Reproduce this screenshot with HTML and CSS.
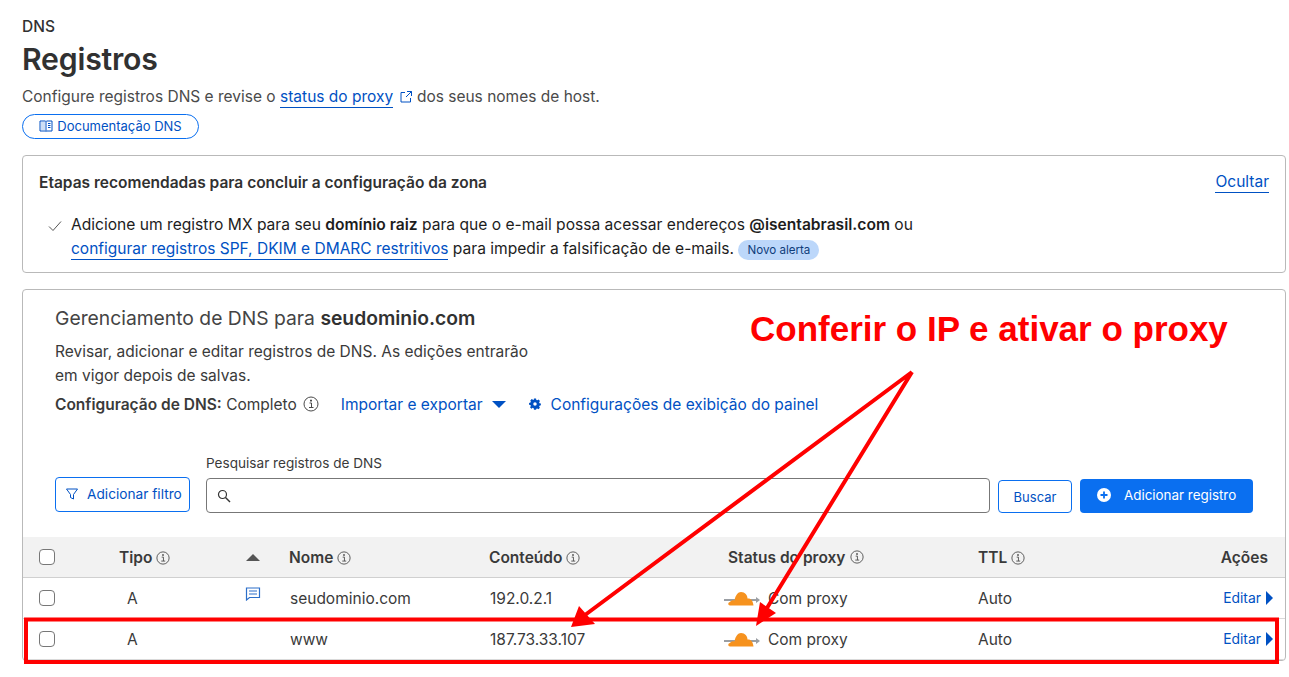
FILE: index.html
```html
<!DOCTYPE html>
<html lang="pt-BR">
<head>
    <meta charset="UTF-8">
    <meta name="viewport" content="width=device-width, initial-scale=1.0">
    <title>Registros DNS</title>
    <link rel="stylesheet" href="styles.css">
</head>
<body>
    <div class="page">
        <header class="page-head">
            <div class="crumb">DNS</div>
            <h1>Registros</h1>
            <p class="intro">Configure registros DNS e revise o <a href="#">status do proxy</a>
                <svg class="ext-icon" viewBox="0 0 14 14" width="14" height="14"><path d="M6 2.500H2v9.500h9.500V8M8 1.500h4.500V6M12.500 1.500 7 7" fill="none" stroke="#0051c3" stroke-width="1"/></svg>
                dos seus nomes de host.</p>
            <a class="doc-pill" href="#">
                <svg viewBox="0 0 14 14" width="14" height="14"><path d="M2 3h4v8H2z" fill="#cfe0f5"/><path d="M1 2h5.500l.5.500.5-.5H13v10H7.500l-.5.500-.5-.5H1zM7 2.500v9.500M9 4.500h2.500M9 6.500h2.500M9 8.500h2.500" fill="none" stroke="#0051c3" stroke-width="1"/></svg>
                Documentação DNS
            </a>
        </header>

        <section class="card steps">
            <div class="steps-top">
                <strong>Etapas recomendadas para concluir a configuração da zona</strong>
                <a href="#" class="hide-link">Ocultar</a>
            </div>
            <div class="step">
                <svg class="check" viewBox="0 0 14 14" width="14" height="14"><path d="M1 7.500 5 11.500 13 2.500" fill="none" stroke="#555" stroke-width="1"/></svg>
                <p>Adicione um registro MX para seu <b>domínio raiz</b> para que o e-mail possa acessar endereços <b class="at">@isentabrasil.com</b> ou<br>
                <a href="#">configurar registros SPF, DKIM e DMARC restritivos</a> para impedir a falsificação de e-mails. <span class="badge">Novo alerta</span></p>
            </div>
        </section>

        <section class="card manage">
            <div class="manage-head">
                <h2>Gerenciamento de DNS para <b>seudominio.com</b></h2>
                <p>Revisar, adicionar e editar registros de DNS. As edições entrarão<br>em vigor depois de salvas.</p>
                <div class="config-row">
                    <span><b>Configuração de DNS:</b> Completo</span>
                    <svg class="info info-lg" viewBox="0 0 16 16" width="16" height="16"><use href="#i-info"/></svg>
                    <a href="#" class="import">Importar e exportar <i class="caret-down"></i></a>
                    <a href="#" class="panel-cfg">
                        <svg viewBox="0 0 16 16" width="14" height="14"><path fill="#0051c3" fill-rule="evenodd" d="M6.500 1h3l.4 2 1.400.6 1.800-1.100 2 2.200-1.200 1.700.5 1.400 2 .4v2.600l-2 .5-.5 1.300 1.100 1.800-2 2-1.800-1.100-1.300.5L9.500 17h-3l-.4-2-1.400-.6-1.800 1.100-2-2 1.200-1.800-.6-1.300-2-.5V7.300l2-.4.6-1.400L1.300 3.700l2-2.100 1.800 1.100L6.100 3zM8 6.500a2.500 2.500 0 1 0 0 5 2.500 2.500 0 0 0 0-5z" transform="translate(1.600 .9) scale(.8)"/></svg>
                        Configurações de exibição do painel
                    </a>
                </div>
            </div>

            <div class="search-row">
                <button class="btn btn-outline filter-btn">
                    <svg viewBox="0 0 14 14" width="14" height="14"><path d="M1.500 2h11L8.500 7.500V12l-3-1.500v-3z" fill="none" stroke="#0051c3" stroke-width="1"/></svg>
                    Adicionar filtro
                </button>
                <div class="search-field">
                    <label>Pesquisar registros de DNS</label>
                    <div class="search-input">
                        <svg viewBox="0 0 14 14" width="14" height="14"><circle cx="5.500" cy="5.500" r="4" fill="none" stroke="#333" stroke-width="1.200"/><path d="M8.500 8.500 13 13" stroke="#333" stroke-width="1.400"/></svg>
                    </div>
                </div>
                <button class="btn btn-outline search-btn">Buscar</button>
                <button class="btn btn-primary">
                    <svg viewBox="0 0 14 14" width="14" height="14"><circle cx="7" cy="7" r="7" fill="#fff"/><path d="M7 3.500v7M3.500 7h7" stroke="#0a6ff0" stroke-width="1.800"/></svg>
                    Adicionar registro
                </button>
            </div>

            <div class="dns-table">
                <div class="dns-row dns-header">
                    <span class="cell-check"><i class="checkbox"></i></span>
                    <span class="cell-type">Tipo <svg class="info" viewBox="0 0 16 16" width="14" height="14"><use href="#i-info"/></svg></span>
                    <span class="cell-sort"><i class="caret-up"></i></span>
                    <span class="cell-name">Nome <svg class="info" viewBox="0 0 16 16" width="14" height="14"><use href="#i-info"/></svg></span>
                    <span class="cell-content">Conteúdo <svg class="info" viewBox="0 0 16 16" width="14" height="14"><use href="#i-info"/></svg></span>
                    <span class="cell-proxy">Status do proxy <svg class="info" viewBox="0 0 16 16" width="14" height="14"><use href="#i-info"/></svg></span>
                    <span class="cell-ttl">TTL <svg class="info" viewBox="0 0 16 16" width="14" height="14"><use href="#i-info"/></svg></span>
                    <span class="cell-actions">Ações</span>
                </div>
                <div class="dns-row">
                    <span class="cell-check"><i class="checkbox"></i></span>
                    <span class="cell-type">A</span>
                    <span class="cell-sort">
                        <svg class="comment" viewBox="0 0 16 16" width="16" height="16"><path d="M1.500 2h13v9.500H4.500L1.500 14zM4 5h8M4 8h8" fill="none" stroke="#2c6fc9" stroke-width="1.200"/></svg>
                    </span>
                    <span class="cell-name">seudominio.com</span>
                    <span class="cell-content">192.0.2.1</span>
                    <span class="cell-proxy"><svg class="cloud" viewBox="0 0 36 16" width="36" height="16"><use href="#i-cloud"/></svg>Com proxy</span>
                    <span class="cell-ttl">Auto</span>
                    <span class="cell-actions"><a href="#">Editar</a><i class="caret-right"></i></span>
                </div>
                <div class="dns-row">
                    <span class="cell-check"><i class="checkbox"></i></span>
                    <span class="cell-type">A</span>
                    <span class="cell-sort"></span>
                    <span class="cell-name">www</span>
                    <span class="cell-content">187.73.33.107</span>
                    <span class="cell-proxy"><svg class="cloud" viewBox="0 0 36 16" width="36" height="16"><use href="#i-cloud"/></svg>Com proxy</span>
                    <span class="cell-ttl">Auto</span>
                    <span class="cell-actions"><a href="#">Editar</a><i class="caret-right"></i></span>
                </div>
            </div>
        </section>
    </div>

    <!-- red annotation drawn on top of the screenshot -->
    <div class="note-text">Conferir o IP e ativar o proxy</div>
    <svg class="note-arrows" viewBox="0 0 1289 677" width="1289" height="677">
        <rect x="26" y="619.500" width="1251" height="42.500" fill="none" stroke="#ff0000" stroke-width="4"/>
        <path d="M912 372 585 615M912 372 767 608" fill="none" stroke="#ff0000" stroke-width="4"/>
        <path d="M571 627 579 606 595 624ZM756 626 760 602 776 613Z" fill="#ff0000"/>
    </svg>

    <svg class="sprite" width="0" height="0">
        <symbol id="i-info" viewBox="0 0 16 16">
            <circle cx="8" cy="8" r="7" fill="none" stroke="currentColor" stroke-width="1"/>
            <path d="M6.500 7h2v4.500M6 11.500h4.500M7.500 4h1v1.200h-1z" fill="none" stroke="currentColor" stroke-width="1"/>
        </symbol>
        <symbol id="i-cloud" viewBox="0 0 36 16">
            <path d="M0 10h18M24 10h9" stroke="#9a9ea3" stroke-width="2"/>
            <path d="M36 10l-4-3v6z" fill="#9a9ea3"/>
            <path d="M6 15.500C4 15.500 3.500 12.500 6 12 7 10 9.500 10 10.500 10.500 11.500 5 14 2 17 2c4 0 6.500 3 6.500 6.500 3-.5 5.500 2 6 7z" fill="#f6921e"/>
        </symbol>
    </svg>
</body>
</html>
```

FILE: styles.css
```css
:root {
    --link: #0051c3;
    --text: #313131;
    --muted: #4a4a4a;
    --line: #b9b9b9;
}

* {
    box-sizing: border-box;
}

html, body {
    margin: 0;
    height: 677px;
    overflow: hidden;
}

body {
    position: relative;
    font-family: Inter, "Liberation Sans", sans-serif;
    font-size: 15.5px;
    color: var(--text);
    background: #fff;
}

a {
    color: var(--link);
    text-decoration: none;
}

p, h1, h2 {
    margin: 0;
    font-weight: normal;
}

.sprite {
    position: absolute;
}

.page {
    padding: 16px 3px 0 22px;
}

.crumb {
    font-weight: 500;
    line-height: 21px;
}

h1 {
    font-size: 30.2px;
    font-weight: 600;
    line-height: 36px;
    margin-top: 4px;
    letter-spacing: -0.2px;
}

.intro {
    margin-top: 9px;
    line-height: 22px;
    color: var(--muted);
}

.intro a {
    border-bottom: 1px solid var(--link);
    padding-bottom: 1px;
}

.ext-icon {
    vertical-align: -2px;
    margin: 0 0 0 1px;
}

.doc-pill {
    display: flex;
    align-items: center;
    justify-content: center;
    gap: 4px;
    width: 177px;
    height: 25px;
    margin-top: 6px;
    padding-bottom: 1px;
    border: 1px solid #0a6ff0;
    border-radius: 13px;
    font-size: 13px;
}

.card {
    border: 1px solid var(--line);
    border-radius: 4px;
}

.steps {
    height: 118px;
    margin-top: 16px;
    padding: 16px 16px 0;
}

.steps-top {
    display: flex;
    justify-content: space-between;
    line-height: 22px;
}

.steps-top strong {
    font-weight: 600;
}

.hide-link {
    border-bottom: 1px solid var(--link);
    line-height: 20px;
    height: 21px;
}

.step {
    display: flex;
    margin-top: 19px;
    padding-left: 9px;
    gap: 9px;
}

.check {
    margin-top: 6px;
    flex: none;
}

.step p {
    font-size: 15.6px;
    line-height: 24px;
    color: #1d1d1d;
}

.step p b {
    font-weight: 600;
}

.step p a {
    font-size: 15.5px;
    border-bottom: 1px solid var(--link);
    padding-bottom: 1px;
}

.badge {
    display: inline-block;
    margin-left: 0;
    padding: 0 9px;
    height: 20px;
    line-height: 20px;
    border-radius: 10px;
    background: #bcd7fa;
    color: #0f3d7a;
    font-size: 11.6px;
}

.manage {
    margin-top: 16px;
    height: 372px;
    overflow: hidden;
}

.manage-head {
    padding: 15px 32px 0;
}

h2 {
    font-size: 19.3px;
    line-height: 26px;
    color: #444;
}

h2 b {
    font-weight: 600;
    color: #313131;
}

.manage-head p {
    margin-top: 9px;
    line-height: 24px;
    color: #3a3a3a;
}

.config-row {
    display: flex;
    align-items: center;
    height: 22px;
    margin-top: 5px;
    color: #3a3a3a;
}

.config-row b {
    font-weight: 600;
}

.info {
    color: #4a4a4a;
    vertical-align: -2px;
}

.info-lg {
    margin-left: 6px;
}

.import {
    margin-left: 22px;
    display: flex;
    align-items: center;
    gap: 9px;
}

.panel-cfg {
    margin-left: 22px;
    display: flex;
    align-items: center;
    gap: 9px;
}

.caret-down {
    width: 0;
    height: 0;
    border-left: 7px solid transparent;
    border-right: 7px solid transparent;
    border-top: 7px solid var(--link);
}

.search-row {
    display: flex;
    align-items: flex-end;
    height: 59px;
    margin-top: 39px;
    padding: 0 32px;
}

.btn {
    display: flex;
    align-items: center;
    height: 35px;
    border-radius: 4px;
    font: inherit;
    font-size: 13.4px;
}

.btn-outline {
    background: #fff;
    border: 1px solid #0a6ff0;
    color: var(--link);
}

.filter-btn {
    width: 135px;
    gap: 8px;
    padding: 0 0 2px 9px;
    margin-bottom: 1px;
    font-size: 13.7px;
}

.search-field {
    width: 784px;
    margin-left: 16px;
}

.search-field label {
    display: block;
    font-size: 13.6px;
    line-height: 18px;
    margin-bottom: 6px;
    color: #3a3a3a;
}

.search-input {
    display: flex;
    align-items: center;
    height: 35px;
    padding-left: 10px;
    border: 1px solid #777;
    border-radius: 4px;
}

.search-btn {
    width: 74px;
    height: 33px;
    justify-content: center;
    margin-left: 8px;
    font-size: 13px;
}

.btn-primary {
    width: 173px;
    height: 34px;
    margin-left: 8px;
    padding: 0 0 2px 17px;
    gap: 13px;
    background: #0a6ff0;
    border: 0;
    color: #fff;
}

.dns-table {
    margin-top: 24px;
}

.dns-row {
    display: grid;
    grid-template-columns: 95px 128px 43px 200px 239px 250px 1fr 120px;
    align-items: center;
    height: 41px;
    border-bottom: 1px solid #d9d9d9;
    color: #3a3a3a;
}

.dns-header {
    background: #f2f2f2;
    font-weight: 600;
    border-bottom-color: #d0d0d0;
}

.cell-check {
    padding-left: 16px;
    display: flex;
}

.checkbox {
    display: block;
    width: 16px;
    height: 16px;
    border: 1px solid #777;
    border-radius: 4px;
    background: #fff;
}

.dns-row > .cell-type {
    padding-left: 9px;
}

.dns-header > .cell-type {
    padding-left: 1px;
}

.caret-up {
    display: block;
    width: 0;
    height: 0;
    margin-top: 1px;
    border-left: 7px solid transparent;
    border-right: 7px solid transparent;
    border-bottom: 7px solid #555;
}

.cell-sort {
    display: flex;
}

.comment {
    margin-top: -8px;
    margin-left: -1px;
}

.dns-row > .cell-name,
.dns-row > .cell-content {
    padding-left: 1px;
}

.dns-header > .cell-name,
.dns-header > .cell-content {
    padding-left: 0;
}

.cell-proxy {
    display: flex;
    align-items: center;
}

.dns-header .cell-proxy {
    gap: 5px;
}

.cloud {
    margin-right: 8px;
    margin-left: -4px;
}

.cell-actions {
    display: flex;
    justify-content: flex-end;
    align-items: center;
    gap: 5px;
    padding-right: 12px;
    font-size: 13.9px;
}

.dns-header .cell-actions {
    font-size: 15.5px;
    padding-right: 17px;
}

.caret-right {
    width: 0;
    height: 0;
    border-top: 7px solid transparent;
    border-bottom: 7px solid transparent;
    border-left: 7px solid var(--link);
}

.note-text {
    position: absolute;
    left: 750px;
    top: 309px;
    font-family: "Liberation Sans", Arial, sans-serif;
    font-size: 35px;
    font-weight: 700;
    line-height: 40px;
    color: #ff0000;
    white-space: nowrap;
}

.note-arrows {
    position: absolute;
    left: 0;
    top: 0;
    pointer-events: none;
}
```
